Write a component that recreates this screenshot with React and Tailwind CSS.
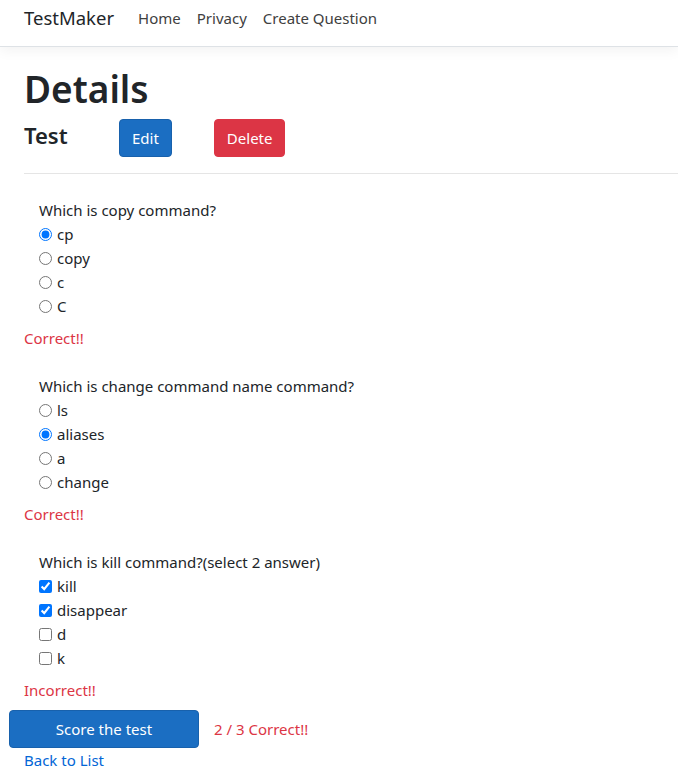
import React, { useState } from 'react';

const questions = [
  {
    text: 'Which is copy command?',
    type: 'radio',
    options: ['cp', 'copy', 'c', 'C'],
    picked: [0],
    result: 'Correct!!',
  },
  {
    text: 'Which is change command name command?',
    type: 'radio',
    options: ['ls', 'aliases', 'a', 'change'],
    picked: [1],
    result: 'Correct!!',
  },
  {
    text: 'Which is kill command?(select 2 answer)',
    type: 'checkbox',
    options: ['kill', 'disappear', 'd', 'k'],
    picked: [0, 1],
    result: 'Incorrect!!',
  },
];

const Question = ({ q, qi }) => {
  const [picked, setPicked] = useState(q.picked);

  const toggle = (i) => {
    if (q.type === 'radio') setPicked([i]);
    else setPicked(picked.includes(i) ? picked.filter((p) => p !== i) : [...picked, i]);
  };

  return (
    <div>
      <div className="pl-[15px]">
        <p className="h-6 leading-6">{q.text}</p>
        {q.options.map((opt, i) => (
          <label key={i} className="flex items-center h-6 leading-6">
            <input
              type={q.type}
              name={`q${qi}`}
              checked={picked.includes(i)}
              onChange={() => toggle(i)}
              className="w-[13px] h-[13px] m-0 mr-[5px] accent-[#0075ff]"
            />
            {opt}
          </label>
        ))}
      </div>
      <p className="mt-[8px] h-6 leading-6 text-[#dc3545]">{q.result}</p>
    </div>
  );
};

export default function App() {
  return (
    <div className="min-h-[777px] bg-white text-[#212529] text-[15px] font-['Noto_Sans',sans-serif] overflow-hidden">
      {/* Navbar */}
      <nav className="h-[47px] border-b border-[#dee2e6] shadow-[0_4px_12px_rgba(0,0,0,0.05)] flex items-start pt-[5px] px-6">
        <span className="text-[18.5px] leading-[26px] text-[#212529] mr-[24px]">TestMaker</span>
        <ul className="flex gap-4 leading-[26px] text-[#404040]">
          <li>Home</li>
          <li>Privacy</li>
          <li>Create Question</li>
        </ul>
      </nav>

      <main className="pl-6">
        <h1 className="text-[37px] leading-[44px] font-semibold mt-[20px]">Details</h1>
        <div className="flex items-start mt-[8px]">
          <h4 className="text-[22px] leading-[28px] font-semibold w-[95px] mt-[2px]">Test</h4>
          <button className="h-[38px] px-3 rounded-[4px] bg-[#1b6ec2] border border-[#1861ac] text-white">Edit</button>
          <button className="ml-[42px] h-[38px] px-3 rounded-[4px] bg-[#dc3545] border border-[#dc3545] text-white">Delete</button>
        </div>
        <hr className="mt-[16px] border-t border-[#e5e5e5]" />

        <div className="mt-[24px] flex flex-col gap-6">
          {questions.map((q, qi) => (
            <Question key={qi} q={q} qi={qi} />
          ))}
        </div>
      </main>

      <div className="flex items-center mt-[8px]">
        <button className="ml-[9px] w-[190px] h-[38px] rounded-[4px] bg-[#1b6ec2] border border-[#1861ac] text-white">
          Score the test
        </button>
        <span className="ml-[15px] text-[#dc3545]">2 / 3 Correct!!</span>
      </div>
      <a href="#" className="block pl-6 mt-[1px] text-[#0366d6]">Back to List</a>
    </div>
  );
}
